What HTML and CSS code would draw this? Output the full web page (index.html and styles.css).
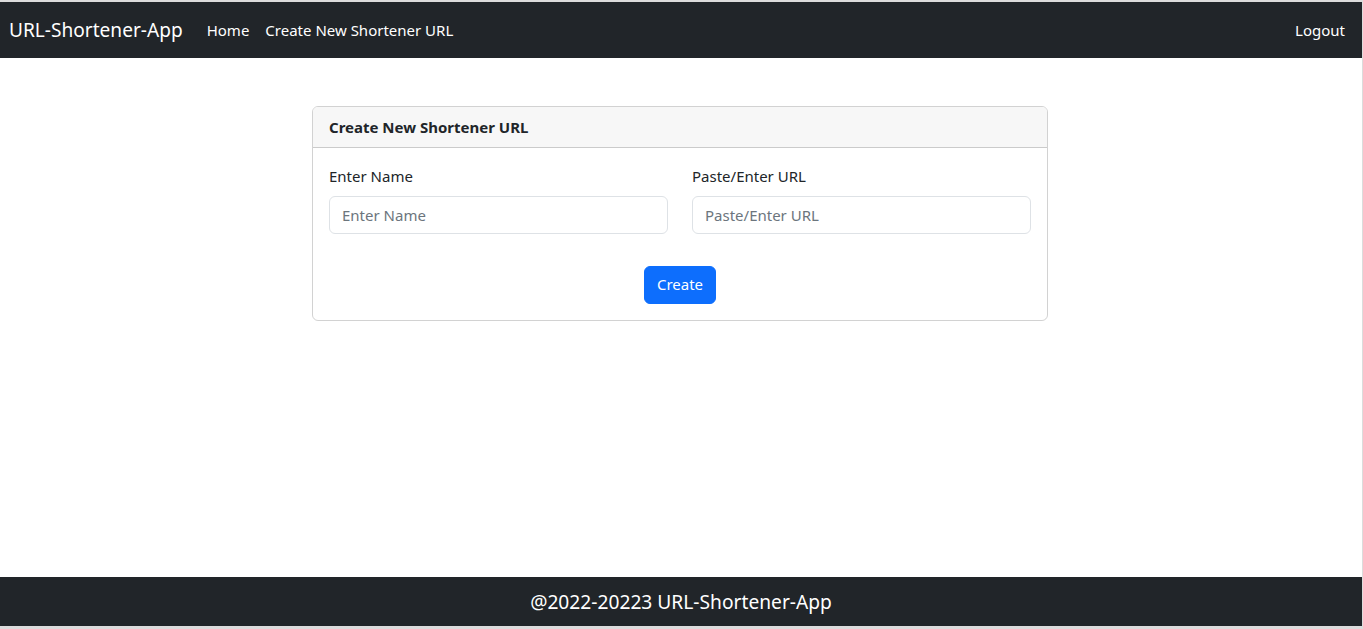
FILE: index.html
```html
<!DOCTYPE html>
<html lang="en">
<head>
<meta charset="utf-8">
<title>URL-Shortener-App</title>
<link rel="stylesheet" href="styles.css">
</head>
<body>
<div class="page">
  <nav class="navbar">
    <a class="brand" href="#">URL-Shortener-App</a>
    <ul class="nav">
      <li><a class="nav-link" href="#">Home</a></li>
      <li><a class="nav-link" href="#">Create New Shortener URL</a></li>
    </ul>
    <ul class="nav nav-right">
      <li><a class="nav-link" href="#">Logout</a></li>
    </ul>
  </nav>
  <main class="main">
    <div class="card">
      <div class="card-header">Create New Shortener URL</div>
      <form class="card-body">
        <div class="row">
          <div class="field">
            <label class="label" for="name">Enter Name</label>
            <input class="input" id="name" type="text" placeholder="Enter Name">
          </div>
          <div class="field">
            <label class="label" for="url">Paste/Enter URL</label>
            <input class="input" id="url" type="text" placeholder="Paste/Enter URL">
          </div>
        </div>
        <div class="actions">
          <button class="btn" type="button">Create</button>
        </div>
      </form>
    </div>
  </main>
  <footer class="footer">@2022-20223 URL-Shortener-App</footer>
</div>
</body>
</html>
```
FILE: styles.css
```css
* { box-sizing: border-box; }
html, body { margin: 0; padding: 0; height: 100%; }
body {
  font-family: "Noto Sans", "Open Sans", Arial, sans-serif;
  font-size: 16px;
  line-height: 1.5;
  color: #212529;
  background: #fff;
  border-top: 2px solid #dcdcdc;
  border-bottom: 3px solid #dcdcdc;
  border-right: 1px solid #dcdcdc;
}
.page {
  display: flex;
  flex-direction: column;
  height: 100%;
}
.navbar {
  background: #212529;
  height: 56px;
  display: flex;
  align-items: center;
  padding: 0 9px 0 9px;
}
.brand {
  color: #fff;
  text-decoration: none;
  font-size: 19.1px;
  margin-right: 16px;
  white-space: nowrap;
}
.nav {
  list-style: none;
  margin: 0;
  padding: 0;
  display: flex;
}
.nav-right { margin-left: auto; }
.nav-link {
  display: block;
  color: #fff;
  text-decoration: none;
  font-size: 15px;
  padding: 8px;
  white-space: nowrap;
}
.main {
  flex: 1;
  padding-top: 48px;
}
.card {
  width: 736px;
  margin: 0 auto;
  border: 1px solid rgba(0,0,0,0.175);
  border-radius: 6px;
  position: relative;
  left: -1px;
}
.card-header {
  background: #f7f7f7;
  border-bottom: 1px solid rgba(0,0,0,0.175);
  border-radius: 5px 5px 0 0;
  padding: 8px 16px;
  font-weight: 700;
  font-size: 15px;
  line-height: 24px;
}
.card-body {
  padding: 17px 16px 16px;
  margin: 0;
}
.row {
  display: grid;
  grid-template-columns: 1fr 1fr;
  column-gap: 24px;
}
.label {
  display: block;
  margin-bottom: 8px;
  font-size: 15px;
}
.input {
  display: block;
  width: 100%;
  height: 38px;
  padding: 6px 12px;
  font: inherit;
  font-size: 15px;
  color: #212529;
  border: 1px solid #dee2e6;
  border-radius: 6px;
  background: #fff;
}
.input::placeholder { color: #6c757d; }
.actions {
  display: flex;
  justify-content: center;
  margin-top: 32px;
}
.btn {
  font: inherit;
  font-size: 15px;
  color: #fff;
  background: #0d6efd;
  border: 1px solid #0d6efd;
  border-radius: 6px;
  height: 38px;
  padding: 0 12px;
}
.footer {
  background: #212529;
  color: #fff;
  text-align: center;
  font-size: 19.2px;
  height: 49px;
  line-height: 49px;
}
```
